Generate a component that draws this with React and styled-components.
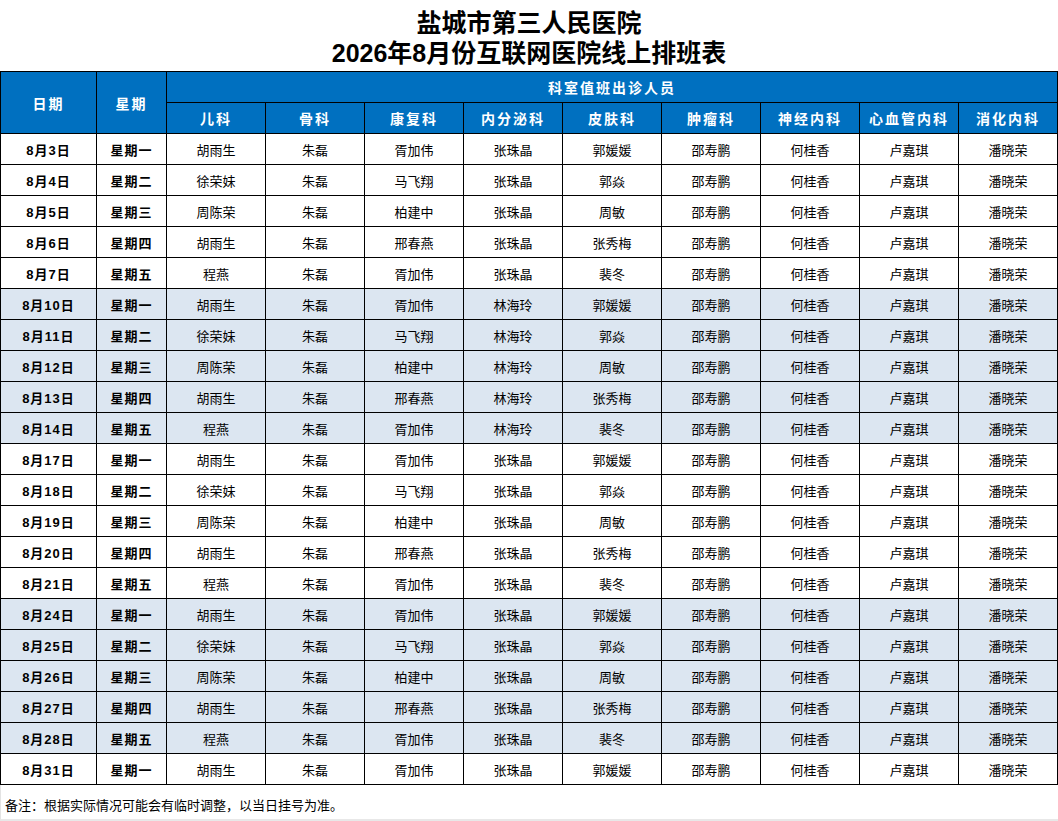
import React from 'react';
import styled, { createGlobalStyle } from 'styled-components';

const GlobalStyle = createGlobalStyle`
  html, body {
    margin: 0;
    padding: 0;
    background: #fff;
  }
  body {
    font-family: "Liberation Sans", "Noto Sans CJK SC", sans-serif;
    color: #000;
  }
`;

const Page = styled.div`
  width: 1058px;
  height: 821px;
  display: flex;
  flex-direction: column;
  box-sizing: border-box;
`;

const Title = styled.h1`
  margin: 0;
  height: 71px;
  padding-top: 8px;
  box-sizing: border-box;
  font-size: 25px;
  line-height: 30px;
  font-weight: bold;
  text-align: center;
`;

const Table = styled.table`
  width: 1058px;
  border-collapse: collapse;
  table-layout: fixed;
`;

const HeadCell = styled.th`
  background: #0070c0;
  color: #fff;
  font-size: 14px;
  font-weight: bold;
  letter-spacing: 2px;
  height: 30px;
  padding: 0;
  border: 1px solid #000;
  text-align: center;
  vertical-align: middle;
`;

const Row = styled.tr`
  background: ${p => (p.$shaded ? '#dce6f1' : '#fff')};
`;

const Cell = styled.td`
  height: 30px;
  padding: 0;
  border: 1px solid #000;
  text-align: center;
  vertical-align: middle;
  font-size: 13px;
  font-weight: ${p => (p.$bold ? 'bold' : 'normal')};
  letter-spacing: ${p => (p.$bold ? '1px' : '0')};
`;

const Note = styled.div`
  flex: 1;
  font-size: 13px;
  padding: 10px 0 0 4px;
  border-left: 1px solid #e3e3e3;
  border-bottom: 2px solid #e8e8e8;
`;

const depts = ['儿科', '骨科', '康复科', '内分泌科', '皮肤科', '肿瘤科', '神经内科', '心血管内科', '消化内科'];
const weekdays = ['星期一', '星期二', '星期三', '星期四', '星期五'];

const byDay = {
  kid: ['胡雨生', '徐荣妹', '周陈荣', '胡雨生', '程燕'],
  rehab: ['胥加伟', '马飞翔', '柏建中', '邢春燕', '胥加伟'],
  skin: ['郭媛媛', '郭焱', '周敏', '张秀梅', '裴冬'],
};

const weeks = [
  { start: 3, shaded: false, endo: '张珠晶' },
  { start: 10, shaded: true, endo: '林海玲' },
  { start: 17, shaded: false, endo: '张珠晶' },
  { start: 24, shaded: true, endo: '张珠晶' },
  { start: 31, shaded: false, endo: '张珠晶', days: 1 },
];

const rows = [];
weeks.forEach(w => {
  for (let i = 0; i < (w.days || 5); i++) {
    rows.push({
      date: `8月${w.start + i}日`,
      week: weekdays[i],
      shaded: w.shaded,
      names: [byDay.kid[i], '朱磊', byDay.rehab[i], w.endo, byDay.skin[i], '邵寿鹏', '何桂香', '卢嘉琪', '潘晓荣'],
    });
  }
});

export default function App() {
  return (
    <Page>
      <GlobalStyle />
      <Title>
        盐城市第三人民医院
        <br />
        2026年8月份互联网医院线上排班表
      </Title>
      <Table>
        <colgroup>
          <col style={{ width: 96 }} />
          <col style={{ width: 70 }} />
          {depts.map(d => (
            <col key={d} />
          ))}
        </colgroup>
        <thead>
          <tr>
            <HeadCell rowSpan={2}>日期</HeadCell>
            <HeadCell rowSpan={2}>星期</HeadCell>
            <HeadCell colSpan={9}>科室值班出诊人员</HeadCell>
          </tr>
          <tr>
            {depts.map(d => (
              <HeadCell key={d}>{d}</HeadCell>
            ))}
          </tr>
        </thead>
        <tbody>
          {rows.map(r => (
            <Row key={r.date} $shaded={r.shaded}>
              <Cell $bold>{r.date}</Cell>
              <Cell $bold>{r.week}</Cell>
              {r.names.map((n, i) => (
                <Cell key={i}>{n}</Cell>
              ))}
            </Row>
          ))}
        </tbody>
      </Table>
      <Note>备注：根据实际情况可能会有临时调整，以当日挂号为准。</Note>
    </Page>
  );
}
